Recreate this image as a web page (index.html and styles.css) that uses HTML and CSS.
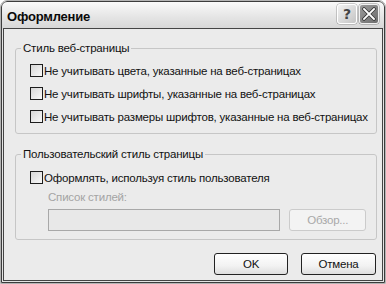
FILE: index.html
```html
<!DOCTYPE html>
<html lang="ru">
<head>
<meta charset="utf-8">
<title>Оформление</title>
<link rel="stylesheet" href="styles.css">
</head>
<body>
<div class="window">
  <div class="inner">
    <div class="titlebar">
      <span class="title">Оформление</span>
      <div class="tb-buttons">
        <div class="tb-btn help">?</div>
        <div class="tb-btn close">
          <svg width="14" height="14" viewBox="0 0 14 14"><path d="M2 2 L12 12 M12 2 L2 12" stroke="#3a3a3a" stroke-width="3.4" stroke-linecap="square"/><path d="M2 2 L12 12 M12 2 L2 12" stroke="#ffffff" stroke-width="1.8" stroke-linecap="square"/></svg>
        </div>
      </div>
    </div>
    <div class="body">
      <fieldset class="group g1">
        <legend>Стиль веб-страницы</legend>
        <div class="row"><span class="cb"></span><span class="lbl">Не учитывать цвета, указанные на веб-страницах</span></div>
        <div class="row"><span class="cb"></span><span class="lbl">Не учитывать шрифты, указанные на веб-страницах</span></div>
        <div class="row"><span class="cb"></span><span class="lbl">Не учитывать размеры шрифтов, указанные на веб-страницах</span></div>
      </fieldset>
      <fieldset class="group g2">
        <legend>Пользовательский стиль страницы</legend>
        <div class="row"><span class="cb"></span><span class="lbl">Оформлять, используя стиль пользователя</span></div>
        <div class="sub">
          <div class="sub-label">Список стилей:</div>
          <div class="sub-controls">
            <div class="input"></div>
            <div class="btn disabled">Обзор...</div>
          </div>
        </div>
      </fieldset>
      <div class="actions">
        <div class="btn ok">OK</div>
        <div class="btn cancel">Отмена</div>
      </div>
    </div>
  </div>
</div>
</body>
</html>
```

FILE: styles.css
```css
html, body {
  margin: 0;
  padding: 0;
  background: #ffffff;
}
.window {
  width: 386px;
  height: 284px;
  box-sizing: border-box;
  border: 1px solid #b4b4b4;
  border-radius: 7px 7px 0 0;
  font-family: "Liberation Sans", Arial, sans-serif;
  font-size: 11.5px;
  letter-spacing: -0.2px;
  color: #111;
  overflow: hidden;
}
.inner {
  height: 100%;
  box-sizing: border-box;
  border: 1px solid #3c3c3c;
  border-radius: 6px 6px 0 0;
  padding: 0 1px 1px 1px;
  background: linear-gradient(#fafafa 0px, #e6e6e6 14px, #d6d6d6 27px, #e4e4e4 28px);
  display: flex;
  flex-direction: column;
}
.titlebar {
  height: 26px;
  box-sizing: border-box;
  display: flex;
  align-items: flex-start;
  justify-content: space-between;
  padding: 2px 4px 0 4px;
}
.title {
  font-weight: bold;
  font-size: 13px;
  line-height: 20px;
  margin-top: 3px;
  letter-spacing: -0.2px;
  color: #0a0a0a;
}
.tb-buttons {
  display: flex;
  gap: 2px;
}
.tb-btn {
  width: 20px;
  height: 20px;
  box-sizing: border-box;
  border-radius: 3px;
  display: flex;
  align-items: center;
  justify-content: center;
}
.help {
  border: 1px solid #ffffff;
  box-shadow: 0 0 0 0.5px #9a9a9a;
  background: linear-gradient(135deg, #f2f2f2, #c4c4c4);
  color: #444;
  font-family: "DejaVu Sans", sans-serif;
  font-weight: bold;
  font-size: 14px;
  letter-spacing: 0;
}
.close {
  border: 1px solid #f0f0f0;
  box-shadow: 0 0 0 0.5px #8a8a8a;
  background: linear-gradient(135deg, #9a9a9a, #6e6e6e);
}
.body {
  flex: 1;
  border: 1px solid #444;
  background: #ebebeb;
  padding: 12px 5px 0 11px;
}
.group {
  margin: 0;
  border: 1px solid #c6c6c6;
  border-radius: 3px;
  padding: 4px 0 5px 0;
  min-width: 0;
}
.group legend {
  line-height: 14px;
  padding: 0 2px;
  margin-left: 5px;
  color: #111;
}
.g2 {
  margin-top: 13px;
  padding: 5px 0 8px 0;
}
.row {
  height: 23px;
  display: flex;
  align-items: center;
  padding-left: 14px;
}
.cb {
  width: 13px;
  height: 13px;
  box-sizing: border-box;
  border: 1px solid #1c1c1c;
  background: linear-gradient(135deg, #d6d6d6, #f8f8f8);
  margin-right: 1px;
  flex: none;
}
.lbl {
  line-height: 14px;
  white-space: nowrap;
}
.sub {
  padding-left: 32px;
  padding-right: 10px;
}
.sub-label {
  margin-top: 1px;
  line-height: 14px;
  color: #a4a4a4;
}
.sub-controls {
  margin-top: 5px;
  display: flex;
  gap: 9px;
}
.input {
  width: 234px;
  height: 22px;
  box-sizing: border-box;
  border: 1px solid #a8a8a8;
  background: #e8e8e8;
}
.btn {
  height: 22px;
  box-sizing: border-box;
  border: 1px solid #222;
  border-radius: 3px;
  background: linear-gradient(#ffffff, #f2f2f2 60%, #dedede);
  display: flex;
  align-items: center;
  justify-content: center;
  line-height: 14px;
  color: #111;
}
.btn.disabled {
  width: 77px;
  border-color: #cbcbcb;
  background: #f3f3f3;
  color: #a8a8a8;
}
.actions {
  margin-top: 13px;
  margin-right: 1px;
  display: flex;
  justify-content: flex-end;
  gap: 13px;
}
.ok {
  width: 74px;
}
.cancel {
  width: 75px;
}
```
